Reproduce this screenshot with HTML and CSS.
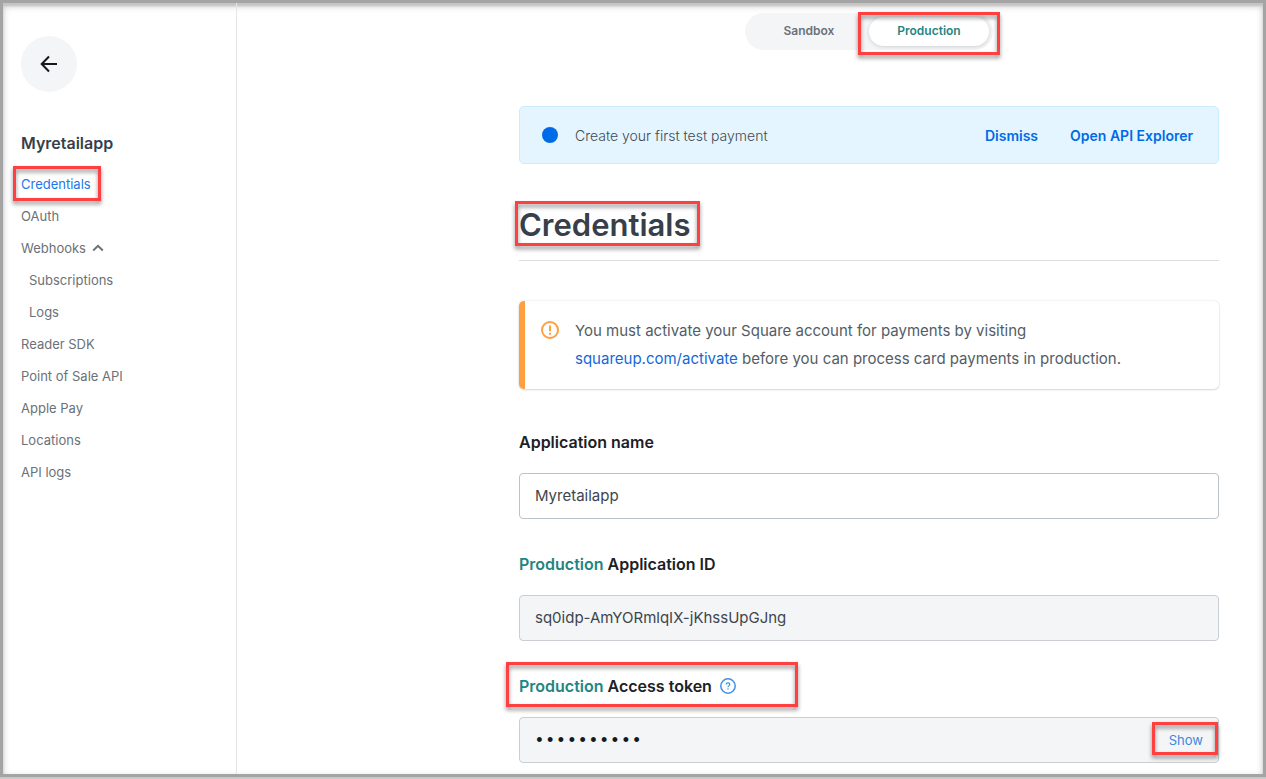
FILE: index.html
```html
<!DOCTYPE html>
<html lang="en">
<head>
<meta charset="utf-8">
<title>Myretailapp – Credentials</title>
<link rel="stylesheet" href="styles.css">
</head>
<body>
<div class="frame">
  <aside class="sidebar">
    <button class="back" type="button" aria-label="Back">
      <svg width="18" height="18" viewBox="0 0 18 18" fill="none" stroke="currentColor" stroke-width="2"><path d="M17 9H2M9 1.500L1.700 9L9 16.500"/></svg>
    </button>
    <h2 class="app-name">Myretailapp</h2>
    <nav class="nav">
      <a class="nav-link active" href="#"><span class="mark mark-nav">Credentials</span></a>
      <a class="nav-link" href="#">OAuth</a>
      <a class="nav-link" href="#">Webhooks
        <svg width="12" height="8" viewBox="0 0 12 8" fill="none" stroke="currentColor" stroke-width="2"><path d="M1.200 6.500L6 1.800L10.800 6.500"/></svg>
      </a>
      <a class="nav-link sub" href="#">Subscriptions</a>
      <a class="nav-link sub" href="#">Logs</a>
      <a class="nav-link" href="#">Reader SDK</a>
      <a class="nav-link" href="#">Point of Sale API</a>
      <a class="nav-link" href="#">Apple Pay</a>
      <a class="nav-link" href="#">Locations</a>
      <a class="nav-link" href="#">API logs</a>
    </nav>
  </aside>
  <main class="main">
    <div class="content">
      <div class="toggle">
        <button class="toggle-item" type="button">Sandbox</button>
        <div class="mark mark-toggle"><button class="toggle-item selected" type="button">Production</button></div>
      </div>
      <section class="banner">
        <span class="dot"></span>
        <span class="banner-text">Create your first test payment</span>
        <button class="banner-action" type="button">Dismiss</button>
        <button class="banner-action" type="button">Open API Explorer</button>
      </section>
      <header class="title-row"><h1 class="title mark mark-title">Credentials</h1></header>
      <section class="notice">
        <svg class="notice-icon" width="18" height="18" viewBox="0 0 18 18" fill="none" stroke="currentColor" stroke-width="2"><circle cx="9" cy="9" r="8"/><path d="M9 4.500V10.200M9 11.700V13.700"/></svg>
        <p class="notice-text">You must activate your Square account for payments by visiting <a class="link" href="#">squareup.com/activate</a> before you can process card payments in production.</p>
      </section>
      <div class="field">
        <label class="label" for="name">Application name</label>
        <input class="input" id="name" type="text" value="Myretailapp">
      </div>
      <div class="field">
        <label class="label" for="appid"><span class="env">Production</span> Application ID</label>
        <input class="input readonly" id="appid" type="text" value="sq0idp-AmYORmlqIX-jKhssUpGJng" readonly>
      </div>
      <div class="field">
        <div class="label-row mark mark-token">
          <label class="label" for="token"><span class="env">Production</span> Access token</label>
          <button class="help" type="button" aria-label="Help">
            <svg width="16" height="16" viewBox="0 0 16 16" fill="none" stroke="currentColor"><circle cx="8" cy="8" r="7.200" stroke-width="1.500"/><path d="M6.200 6.600C6.200 5.500 7 4.900 8 4.900S9.800 5.500 9.800 6.500C9.800 7.600 8 7.700 8 9.200M8 10.300V11.500" stroke-width="1.200"/></svg>
          </button>
        </div>
        <div class="secret">
          <input class="input readonly" id="token" type="password" value="0123456789" readonly>
          <button class="show mark mark-show" type="button">Show</button>
        </div>
      </div>
    </div>
  </main>
</div>
</body>
</html>
```
FILE: styles.css
```css
* { box-sizing: border-box; }

body {
  margin: 0;
  padding-bottom: 2px;
  background: #c9c9c9;
  color: #1b2126;
  font-family: Inter, "Liberation Sans", sans-serif;
}

button, input { font-family: inherit; }
button { padding: 0; border: 0; background: none; cursor: pointer; }
a { text-decoration: none; }
svg { display: block; }

.frame {
  display: flex;
  min-height: calc(100vh - 2px);
  border: 3px solid #a4a4a4;
  background: #fff;
  box-shadow: inset 0 3px 2px #c4c4c4, inset 0 3px 7px #c8c8c8;
}

.sidebar {
  flex: none;
  width: 234px;
  padding: 33px 18px;
  border-right: 1px solid #e3e5e8;
}

.back {
  display: grid;
  place-items: center;
  width: 56px;
  height: 56px;
  border-radius: 50%;
  background: #f3f5f7;
  color: #14191d;
}

.app-name {
  margin: 39px 0 13px;
  color: #373f4a;
  font-size: 16px;
  font-weight: 600;
  line-height: 24px;
}

.nav { display: flex; flex-direction: column; }

.nav-link {
  display: flex;
  align-items: center;
  gap: 6px;
  color: #6a7178;
  font-size: 13px;
  line-height: 32px;
}

.nav-link.active { color: #1a78ea; }
.nav-link.sub { padding-left: 8px; }

.main {
  flex: 1;
  padding: 10px 44px 11px;
}

.content { max-width: 700px; margin-left: auto; }

.toggle {
  display: flex;
  width: fit-content;
  margin: 0 auto 56px;
  padding: 4px;
  border-radius: 20px;
  background: #f3f5f7;
}

.toggle-item {
  width: 120px;
  height: 29px;
  padding-bottom: 2px;
  border-radius: 15px;
  color: #6a7178;
  font-size: 12px;
  font-weight: 600;
}

.toggle-item.selected {
  background: #fff;
  color: #1f8583;
  box-shadow: 0 1px 4px rgba(0, 0, 0, 0.15);
}

.banner {
  display: flex;
  align-items: center;
  gap: 32px;
  height: 58px;
  padding: 0 25px 0 22px;
  border: 1px solid #c9ecff;
  border-radius: 5px;
  background: #e4f5ff;
}

.dot {
  width: 16px;
  height: 16px;
  margin-right: -15px;
  border-radius: 50%;
  background: #006be6;
}

.banner-text {
  flex: 1;
  color: #404a54;
  font-size: 14px;
  font-weight: 300;
}

.banner-action {
  color: #006be6;
  font-size: 14px;
  font-weight: 600;
}

.title-row {
  margin: 41px 0 40px;
  padding-bottom: 15px;
  border-bottom: 1px solid #dcdfe1;
}

.title {
  width: fit-content;
  margin: 0;
  color: #373f4a;
  font-size: 31px;
  font-weight: 600;
  line-height: 40px;
}

.notice {
  display: flex;
  gap: 16px;
  padding: 16px;
  border-left: 6px solid #ff9f40;
  border-radius: 5px;
  box-shadow: 0 0 2px rgba(0, 0, 0, 0.16), 0 1px 2px rgba(0, 0, 0, 0.12);
}

.notice-icon { flex: none; margin-top: 4px; color: #ff9f40; }

.notice-text {
  margin: 0;
  max-width: 580px;
  color: #535d66;
  font-size: 15px;
  line-height: 28px;
}

.link { color: #1269d8; }

.field {
  display: flex;
  flex-direction: column;
  gap: 19px;
  margin-top: 33px;
}

.notice + .field { margin-top: 41px; }

.label {
  font-size: 16px;
  font-weight: 600;
  line-height: 24px;
}

.label-row {
  display: flex;
  align-items: center;
  align-self: flex-start;
  gap: 8px;
}

.env { color: #1f8583; }
.help { color: #4090e8; }

.input {
  width: 100%;
  height: 46px;
  padding: 0 15px 2px;
  border: 1px solid #bcc3c8;
  border-radius: 4px;
  background: #fff;
  color: #3d454d;
  font-size: 15px;
}

.input.readonly { border-color: #caced2; background: #f3f5f7; }

.input[type="password"] {
  padding: 2px 14px 0;
  color: #14191d;
  font-family: "Liberation Mono", monospace;
  font-size: 18px;
}

.secret {
  display: grid;
  grid-template-columns: 1fr auto;
  align-items: center;
}

.secret .input { grid-area: 1 / 1 / 2 / 3; }

.show {
  grid-area: 1 / 2;
  margin-right: 16px;
  color: #4088dd;
  font-size: 13px;
  line-height: 20px;
}

/* Red callout outlines */
.mark { position: relative; }

.mark::after {
  content: "";
  position: absolute;
  border: 3px solid #ff4040;
  filter: drop-shadow(0 3px 2px rgba(0, 0, 0, 0.45));
  pointer-events: none;
}

.mark-nav::after { inset: -2px -10px -1px -8px; }
.mark-toggle::after { inset: -5px -11px -9px; }
.mark-title::after { inset: -4px -10px -1px -4px; }
.mark-token::after { inset: -12px -62px -9px -13px; }
.mark-show::after { inset: -8px -15px -5px -17px; }
```
